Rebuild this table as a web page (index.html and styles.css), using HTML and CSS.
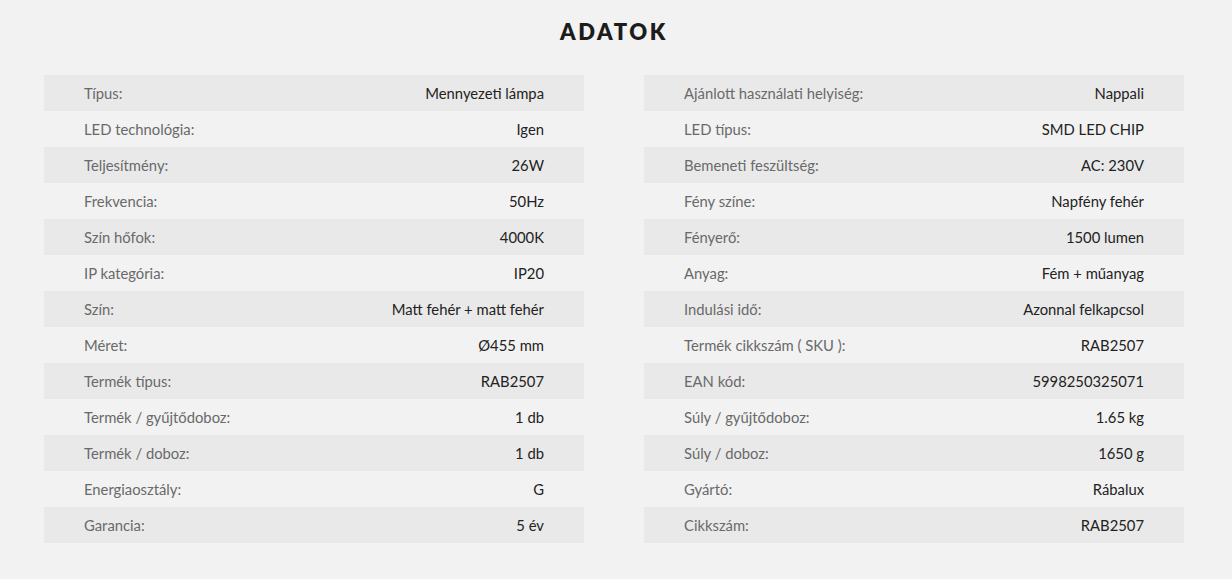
FILE: index.html
```html
<!DOCTYPE html>
<html lang="hu">
<head>
<meta charset="utf-8">
<link rel="stylesheet" href="styles.css">
</head>
<body>
<section class="specs">
  <h2 class="title">ADATOK</h2>
  <div class="tables">
    <div class="table">
      <div class="row"><span class="label">Típus:</span><span class="value">Mennyezeti lámpa</span></div>
      <div class="row"><span class="label">LED technológia:</span><span class="value">Igen</span></div>
      <div class="row"><span class="label">Teljesítmény:</span><span class="value">26W</span></div>
      <div class="row"><span class="label">Frekvencia:</span><span class="value">50Hz</span></div>
      <div class="row"><span class="label">Szín hőfok:</span><span class="value">4000K</span></div>
      <div class="row"><span class="label">IP kategória:</span><span class="value">IP20</span></div>
      <div class="row"><span class="label">Szín:</span><span class="value">Matt fehér + matt fehér</span></div>
      <div class="row"><span class="label">Méret:</span><span class="value">Ø455 mm</span></div>
      <div class="row"><span class="label">Termék típus:</span><span class="value">RAB2507</span></div>
      <div class="row"><span class="label">Termék / gyűjtődoboz:</span><span class="value">1 db</span></div>
      <div class="row"><span class="label">Termék / doboz:</span><span class="value">1 db</span></div>
      <div class="row"><span class="label">Energiaosztály:</span><span class="value">G</span></div>
      <div class="row"><span class="label">Garancia:</span><span class="value">5 év</span></div>
    </div>
    <div class="table">
      <div class="row"><span class="label">Ajánlott használati helyiség:</span><span class="value">Nappali</span></div>
      <div class="row"><span class="label">LED típus:</span><span class="value">SMD LED CHIP</span></div>
      <div class="row"><span class="label">Bemeneti feszültség:</span><span class="value">AC: 230V</span></div>
      <div class="row"><span class="label">Fény színe:</span><span class="value">Napfény fehér</span></div>
      <div class="row"><span class="label">Fényerő:</span><span class="value">1500 lumen</span></div>
      <div class="row"><span class="label">Anyag:</span><span class="value">Fém + műanyag</span></div>
      <div class="row"><span class="label">Indulási idő:</span><span class="value">Azonnal felkapcsol</span></div>
      <div class="row"><span class="label">Termék cikkszám ( SKU ):</span><span class="value">RAB2507</span></div>
      <div class="row"><span class="label">EAN kód:</span><span class="value">5998250325071</span></div>
      <div class="row"><span class="label">Súly / gyűjtődoboz:</span><span class="value">1.65 kg</span></div>
      <div class="row"><span class="label">Súly / doboz:</span><span class="value">1650 g</span></div>
      <div class="row"><span class="label">Gyártó:</span><span class="value">Rábalux</span></div>
      <div class="row"><span class="label">Cikkszám:</span><span class="value">RAB2507</span></div>
    </div>
  </div>
</section>
</body>
</html>
```
FILE: styles.css
```css
html, body {
  margin: 0;
  padding: 0;
  background: #f2f2f2;
}
body {
  font-family: "Lato", "Noto Sans", sans-serif;
  color: #222;
}
.specs {
  padding: 18px 0 0 44px;
  width: 1140px;
}
.title {
  margin: 0 0 29px 0;
  text-align: center;
  font-family: "Lato", sans-serif;
  font-weight: 800;
  font-size: 22px;
  line-height: 28px;
  letter-spacing: 2.6px;
  color: #1c1c1c;
}
.tables {
  display: flex;
  gap: 60px;
}
.table {
  width: 540px;
  display: flex;
  flex-direction: column;
}
.row {
  height: 36px;
  display: flex;
  align-items: center;
  justify-content: space-between;
  padding: 0 40px;
  font-size: 14.8px;
}
.row:nth-child(odd) {
  background: #e9e9e9;
}
.label {
  color: #696969;
}
.value {
  color: #222;
}
```
